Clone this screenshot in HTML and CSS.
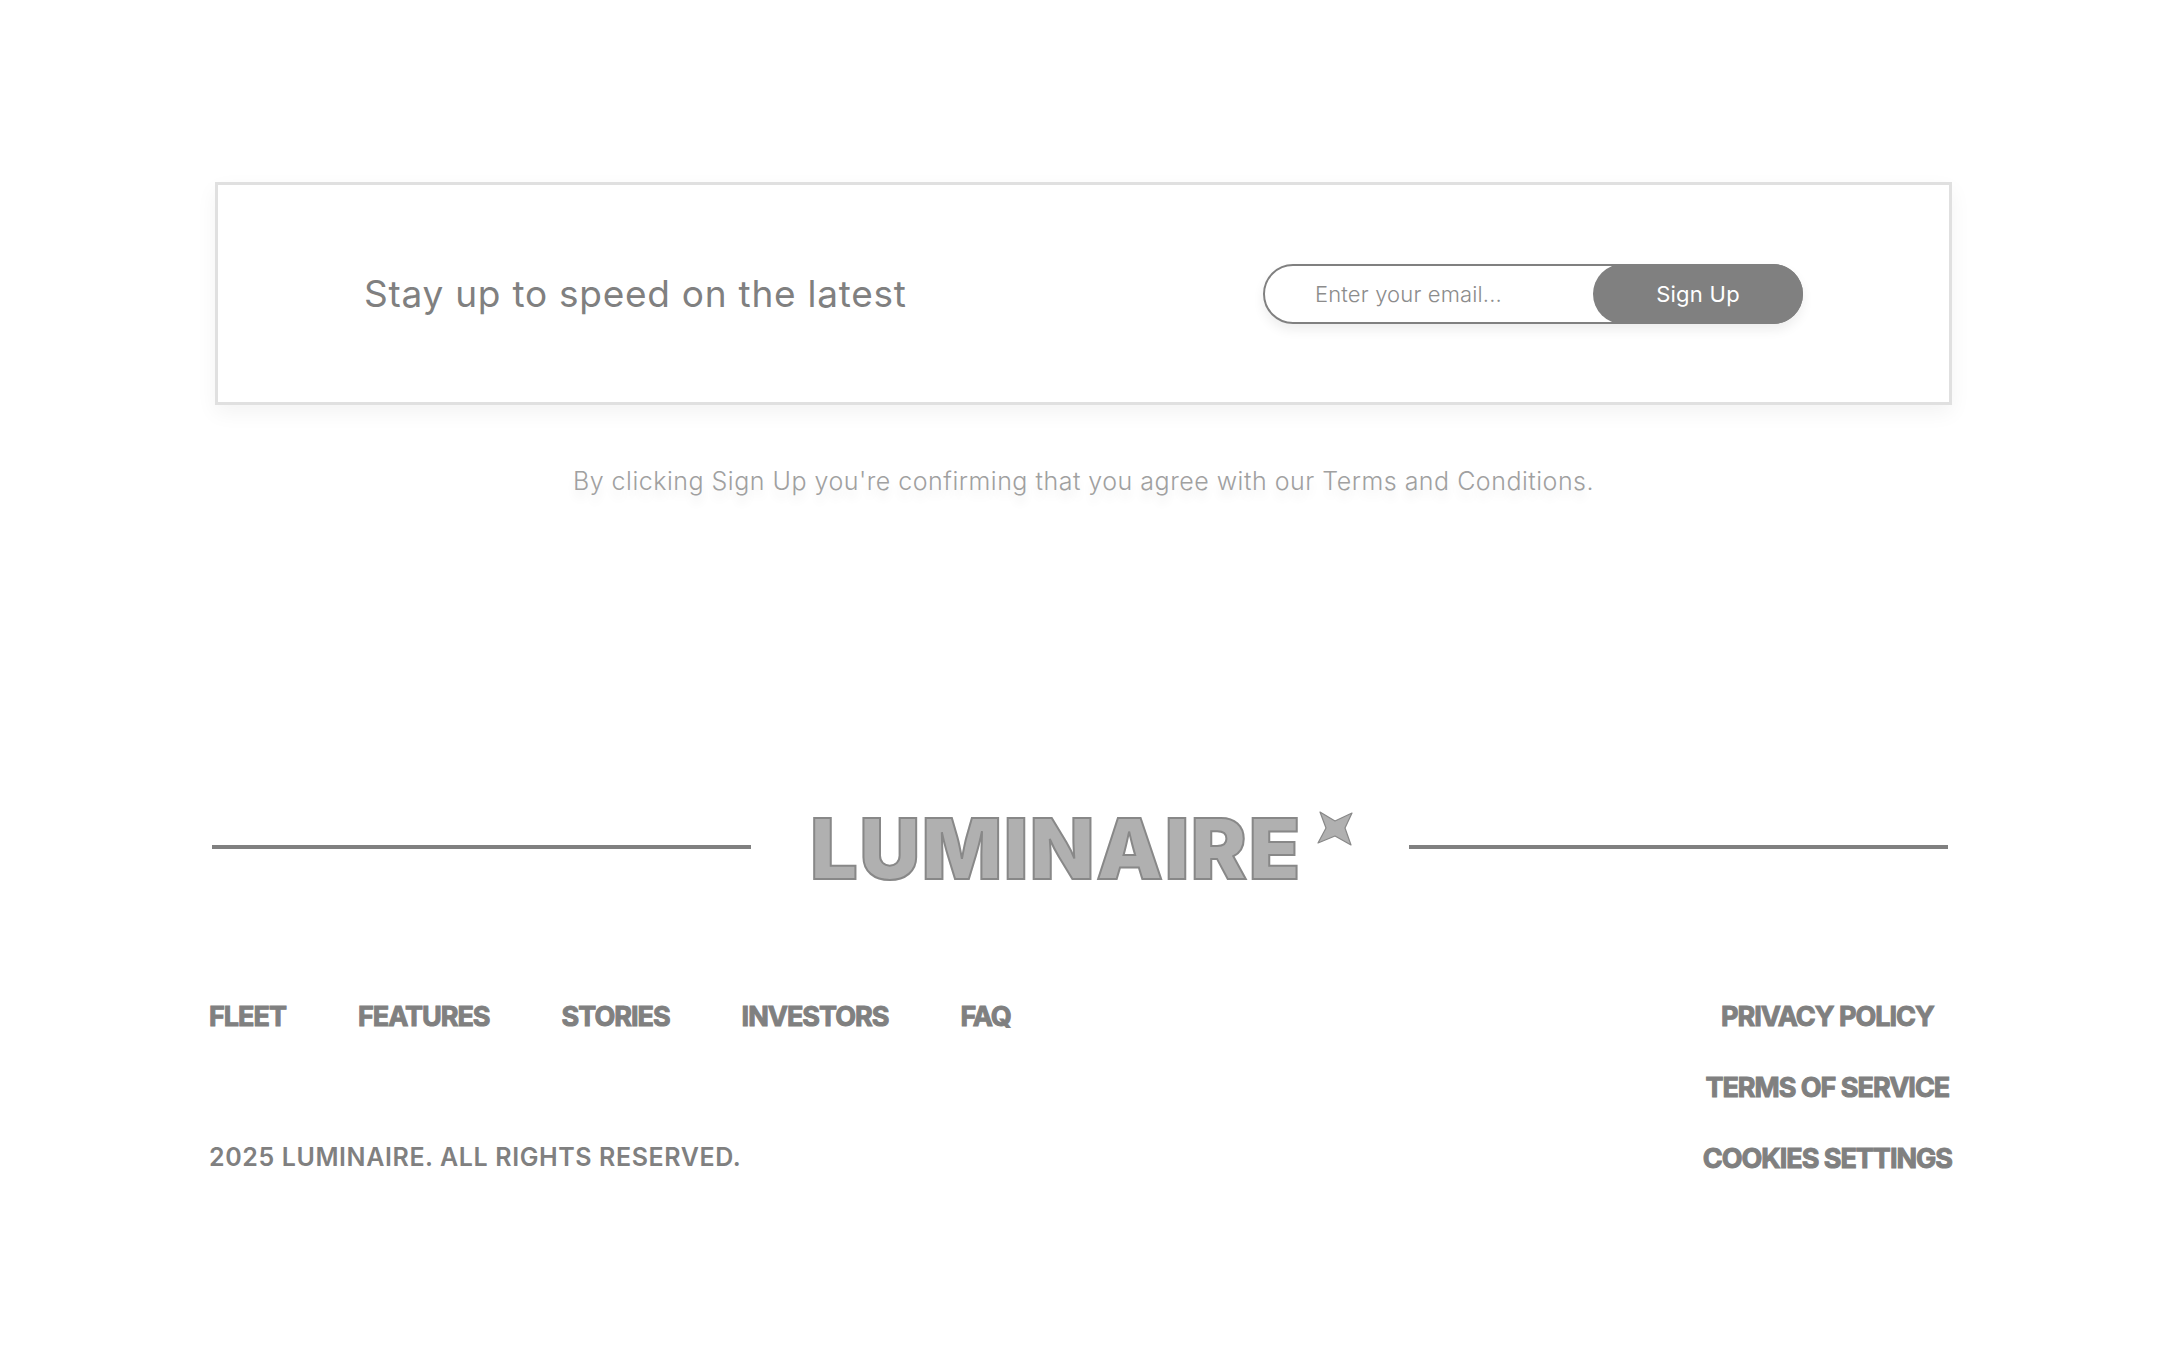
FILE: index.html
```html
<!DOCTYPE html>
<html lang="en">
<head>
    <meta charset="UTF-8">
    <meta name="viewport" content="width=device-width, initial-scale=1.0">
    <title>Luminaire</title>

    <link rel="stylesheet" href="styles.css">

</head>
<body>

    <section class="signup">
        <div class="signupBox">
            <h2 class="signupTitle">Stay up to speed on the latest</h2>
            <form class="signupForm">
                <input class="emailInput" type="email" placeholder="Enter your email...">
                <button class="signupBtn" type="button">Sign Up</button>
            </form>
        </div>
        <p class="terms">By clicking Sign Up you're confirming that you agree with our Terms and Conditions.</p>
    </section>

    <footer class="footer">
        <div class="logoRow">
            <span class="logoLine"></span>
            <div class="logo">
                <span class="logoText">LUMINAIRE</span>
                <svg class="logoStar" viewBox="0 0 36 36" width="36" height="36">
                    <path d="M3 2 L18 11 L35 3 L28 18 L34 35 L18 26 L1 33 L9 18 Z" fill="#b0b0b0" stroke="#888" stroke-width="1.2" stroke-linejoin="round"/>
                </svg>
            </div>
            <span class="logoLine"></span>
        </div>

        <div class="footerBottom">
            <div class="footerLeft">
                <ul class="navList">
                    <li>FLEET</li>
                    <li>FEATURES</li>
                    <li>STORIES</li>
                    <li>INVESTORS</li>
                    <li>FAQ</li>
                </ul>
                <p class="copy">2025 LUMINAIRE. ALL RIGHTS RESERVED.</p>
            </div>
            <ul class="legalList">
                <li>PRIVACY POLICY</li>
                <li>TERMS OF SERVICE</li>
                <li>COOKIES SETTINGS</li>
            </ul>
        </div>
    </footer>

</body>
</html>
```

FILE: styles.css
```css
*{padding: 0px; margin: 0px; box-sizing: border-box;}
ul, li{list-style: none;}
html, body{background: #fff;}
body{font-family: "Inter", "Liberation Sans", sans-serif; color: #808080; width: 2160px; height: 1353px; overflow: hidden;}

.signup{padding: 182px 208px 0 215px;}
.signupBox{display: flex; align-items: center; justify-content: space-between; height: 223px; padding: 0 146px 0 146px; border: 3px solid #e0e0e0; box-shadow: 0 8px 20px rgba(0,0,0,0.05);}
.signupTitle{font-size: 37px; font-weight: 400; letter-spacing: 0.75px; color: #808080;}
.signupForm{position: relative; display: flex; width: 540px; height: 60px; border: 2px solid #808080; border-radius: 30px; box-shadow: 0 6px 12px rgba(0,0,0,0.07);}
.emailInput{flex: 1; min-width: 0; border: 0; outline: 0; background: none; padding-left: 50px; font: 300 22px "Inter", sans-serif; letter-spacing: 0.15px; color: #808080;}
.emailInput::placeholder{color: #8c8c8c; opacity: 1;}
.signupBtn{position: absolute; top: -2px; right: -2px; width: 210px; height: 60px; border: 0; border-radius: 30px; background: #808080; color: #fff; font: 400 22px "Inter", sans-serif; letter-spacing: 0.25px;}
.terms{margin-top: 61px; text-align: center; font-size: 25px; font-weight: 300; letter-spacing: 0.5px; color: #a0a0a0; text-shadow: 0 8px 10px rgba(0,0,0,0.08);}

.footer{padding: 0 208px 0 209px;}
.logoRow{display: flex; align-items: center; margin-top: 299px; padding: 0 4px 0 3px;}
.logoLine{flex: 1; height: 4px; background: #808080;}
.logo{display: flex; align-items: flex-start; gap: 15px; padding: 0 56px 0 59px;}
.logoText{padding-top: 4px; font-size: 84px; line-height: 100px; font-weight: 900; letter-spacing: 1.7px; color: #b0b0b0; -webkit-text-stroke: 2px #888;}
.logoStar{margin-top: 15px;}

.footerBottom{display: flex; justify-content: space-between; margin-top: 101px;}
.footerLeft{display: flex; flex-direction: column; justify-content: space-between;}
.navList{display: flex; gap: 72px;}
.navList li, .legalList li{font-size: 27px; line-height: 34px; font-weight: 700; letter-spacing: -1px; -webkit-text-stroke: 1px #808080;}
.copy{padding-bottom: 2px; font-size: 25px; line-height: 34px; font-weight: 600; letter-spacing: 0.6px;}
.legalList{display: flex; flex-direction: column; gap: 37px; text-align: center;}
```
